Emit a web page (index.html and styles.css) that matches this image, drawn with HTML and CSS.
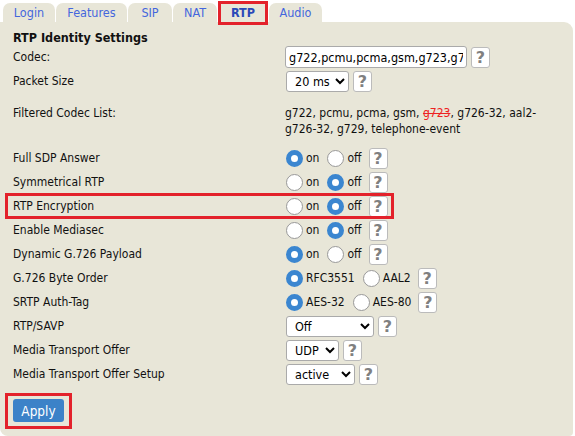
FILE: index.html
```html
<!DOCTYPE html>
<html lang="en">
<head>
    <meta charset="UTF-8">
    <meta name="viewport" content="width=device-width, initial-scale=1.0">
    <title>RTP Settings</title>
    <link rel="stylesheet" href="styles.css">
</head>
<body>

<ul class="tabs">
    <li><a href="#">Login</a></li>
    <li><a href="#">Features</a></li>
    <li><a href="#">SIP</a></li>
    <li><a href="#">NAT</a></li>
    <li class="active"><a href="#">RTP</a></li>
    <li><a href="#">Audio</a></li>
</ul>

<form class="panel">
    <h3>RTP Identity Settings</h3>

    <div class="row">
        <label>Codec:</label>
        <div class="value">
            <input type="text" class="codecs" value="g722,pcmu,pcma,gsm,g723,g726-32,aal2-g726-32,g729,telephone-event">
            <button type="button" class="help">?</button>
        </div>
    </div>

    <div class="row">
        <label>Packet Size</label>
        <div class="value">
            <select class="sel-ms"><option>20 ms</option></select>
            <button type="button" class="help">?</button>
        </div>
    </div>

    <div class="row tall">
        <label>Filtered Codec List:</label>
        <div class="value text">g722, pcmu, pcma, gsm, <s class="dropped">g723</s>, g726-32, aal2-g726-32, g729, telephone-event</div>
    </div>

    <div class="row">
        <label>Full SDP Answer</label>
        <div class="value">
            <input type="radio" name="sdp" checked><span>on</span>
            <input type="radio" name="sdp"><span>off</span>
            <button type="button" class="help">?</button>
        </div>
    </div>

    <div class="row">
        <label>Symmetrical RTP</label>
        <div class="value">
            <input type="radio" name="sym"><span>on</span>
            <input type="radio" name="sym" checked><span>off</span>
            <button type="button" class="help">?</button>
        </div>
    </div>

    <div class="row marked">
        <label>RTP Encryption</label>
        <div class="value">
            <input type="radio" name="enc"><span>on</span>
            <input type="radio" name="enc" checked><span>off</span>
            <button type="button" class="help">?</button>
        </div>
    </div>

    <div class="row">
        <label>Enable Mediasec</label>
        <div class="value">
            <input type="radio" name="msec"><span>on</span>
            <input type="radio" name="msec" checked><span>off</span>
            <button type="button" class="help">?</button>
        </div>
    </div>

    <div class="row">
        <label>Dynamic G.726 Payload</label>
        <div class="value">
            <input type="radio" name="dyn" checked><span>on</span>
            <input type="radio" name="dyn"><span>off</span>
            <button type="button" class="help">?</button>
        </div>
    </div>

    <div class="row">
        <label>G.726 Byte Order</label>
        <div class="value">
            <input type="radio" name="order" checked><span>RFC3551</span>
            <input type="radio" name="order"><span>AAL2</span>
            <button type="button" class="help">?</button>
        </div>
    </div>

    <div class="row">
        <label>SRTP Auth-Tag</label>
        <div class="value">
            <input type="radio" name="tag" checked><span>AES-32</span>
            <input type="radio" name="tag"><span>AES-80</span>
            <button type="button" class="help">?</button>
        </div>
    </div>

    <div class="row">
        <label>RTP/SAVP</label>
        <div class="value">
            <select class="sel-savp"><option>Off</option></select>
            <button type="button" class="help">?</button>
        </div>
    </div>

    <div class="row">
        <label>Media Transport Offer</label>
        <div class="value">
            <select class="sel-udp"><option>UDP</option></select>
            <button type="button" class="help">?</button>
        </div>
    </div>

    <div class="row">
        <label>Media Transport Offer Setup</label>
        <div class="value">
            <select class="sel-setup"><option>active</option></select>
            <button type="button" class="help">?</button>
        </div>
    </div>

    <div class="actions">
        <button type="submit" class="apply">Apply</button>
    </div>
</form>

</body>
</html>
```

FILE: styles.css
```css
body {
    margin: 0;
    font-family: "DejaVu Sans Condensed", "DejaVu Sans", sans-serif;
    font-size: 12px;
    color: #111;
    background-color: #fff;
}
.tabs {
    list-style: none;
    margin: 0;
    padding: 3px 0 0 3px;
    display: flex;
    gap: 1px;
    height: 19px;
}
.tabs li {
    background-color: #e8e6d8;
    border-radius: 7px 7px 0 0;
    height: 19px;
    position: relative;
}
.tabs a {
    display: block;
    padding: 2px 0 0 0;
    text-align: center;
    color: #4466dd;
    text-decoration: none;
    font-size: 12.5px;
}
.tabs li:nth-child(1) { width: 52px; }
.tabs li:nth-child(2) { width: 71px; }
.tabs li:nth-child(3) { width: 44px; }
.tabs li:nth-child(4) { width: 44px; }
.tabs li:nth-child(5) { width: 50px; }
.tabs li:nth-child(6) { width: 53px; }
.tabs .active a {
    font-weight: bold;
    color: #2a49b8;
}
/* red highlight around current tab */
.tabs .active::after {
    content: "";
    position: absolute;
    left: 0;
    top: -2px;
    width: 44px;
    height: 18px;
    border: 3px solid #e3222b;
}
.panel {
    background-color: #e8e6d8;
    width: 573px;
    border-radius: 0 9px 4px 8px;
    padding: 7px 0 8px 13px;
    box-sizing: border-box;
    min-height: 414px;
}
h3 {
    margin: 2px 0 0 0;
    font-size: 12.5px;
    line-height: 14px;
    font-weight: bold;
}
.row {
    display: flex;
    align-items: center;
    height: 24px;
    position: relative;
}
.row label {
    width: 272px;
    flex: none;
}
.row.tall {
    align-items: flex-start;
    height: 53px;
    padding-top: 12px;
    box-sizing: border-box;
}
.row.tall label {
    line-height: 16px;
}
.value.text {
    display: block;
    width: 262px;
    line-height: 16px;
}
.value {
    display: flex;
    align-items: center;
}
.dropped {
    color: #ee2222;
}
.row.marked::after {
    content: "";
    position: absolute;
    left: -8px;
    top: -1px;
    width: 383px;
    height: 20px;
    border: 3px solid #e3222b;
}
input[type=text].codecs {
    width: 182px;
    height: 22px;
    box-sizing: border-box;
    border: 1px solid #aaa;
    border-radius: 3px;
    padding: 0 3px;
    font-family: inherit;
    font-size: 12.5px;
    margin: 0 4px 0 0;
    background: #fff;
}
select {
    height: 21px;
    border: 1px solid #aaa;
    border-radius: 3px;
    font-family: inherit;
    font-size: 12.5px;
    background: #fff;
    margin: 0 4px 0 1px;
    padding: 0 0 0 4px;
}
.sel-ms { width: 63px; }
.sel-savp { width: 88px; }
.sel-udp { width: 53px; }
.sel-setup { width: 69px; }
.help {
    width: 19px;
    height: 21px;
    padding: 0;
    border: 1px solid #bbb;
    border-radius: 3px;
    background: #fff;
    color: #808080;
    font-family: "DejaVu Sans", sans-serif;
    font-weight: bold;
    font-size: 16px;
    line-height: 19px;
}
input[type=radio] {
    appearance: none;
    -webkit-appearance: none;
    width: 17px;
    height: 17px;
    margin: 0 3px 0 1px;
    border: 1px solid #999;
    border-radius: 50%;
    background: #fff;
    box-sizing: border-box;
}
input[type=radio]:checked {
    border: 5.5px solid #3b86d0;
    background: #fff;
}
.value span {
    margin-right: 7px;
}
.actions {
    margin-top: 13px;
    position: relative;
    width: 51px;
}
.apply {
    background-color: #3c82c8;
    color: #fff;
    border: none;
    border-radius: 3px;
    font-family: inherit;
    font-size: 13.5px;
    width: 51px;
    height: 23px;
    padding: 0;
}
.actions::after {
    content: "";
    position: absolute;
    left: -8px;
    top: -6px;
    width: 61px;
    height: 30px;
    border: 3px solid #e3222b;
}
```
